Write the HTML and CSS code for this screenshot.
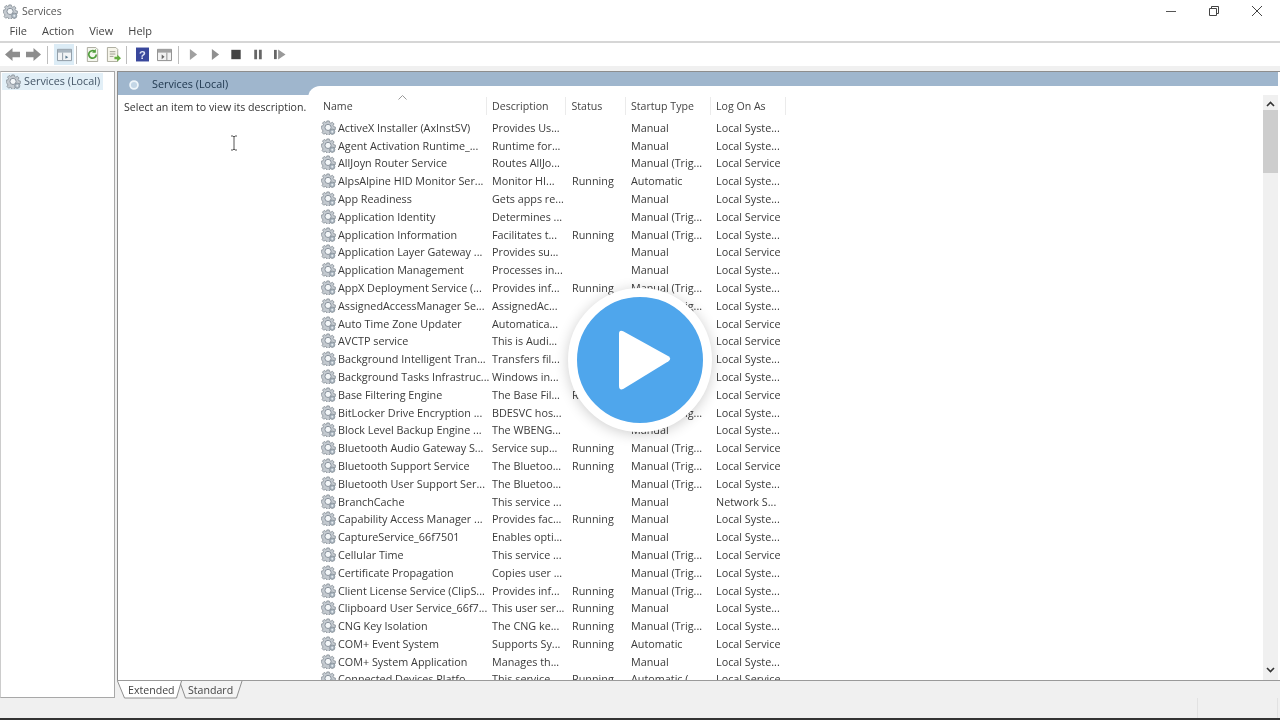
FILE: index.html
```html
<!DOCTYPE html>
<html lang="en">
<head>
<meta charset="utf-8">
<title>Services</title>
<link rel="stylesheet" href="styles.css">
</head>
<body>
<svg class="defs" width="0" height="0" aria-hidden="true">
  <symbol id="gear" viewBox="0 0 16 16">
    <path d="M6.200 1h2.600l.4 1.800 1.300.6 1.600-1 1.800 1.800-1 1.600.6 1.300 1.800.4v2.600l-1.800.4-.6 1.300 1 1.600-1.800 1.800-1.600-1-1.300.6-.4 1.800H6.200l-.4-1.800-1.300-.6-1.600 1-1.800-1.800 1-1.600-.6-1.300L.2 9.200V6.600L2 6.200l.6-1.300-1-1.600L3.400 1.500l1.600 1 1.300-.6z" fill="#c4cad0" stroke="#7f8890" stroke-width=".8"/>
    <circle cx="7.500" cy="7.900" r="3.300" fill="#f4f7f9" stroke="#828c96" stroke-width="1"/>
    <circle cx="12" cy="12.500" r="2.800" fill="#aab6c1" stroke="#7f8890" stroke-width=".7"/>
    <circle cx="12" cy="12.500" r="1" fill="#e9eef1"/>
  </symbol>
</svg>
<div class="window">
  <header class="titlebar">
    <svg class="title-icon"><use href="#gear"/></svg>
    <span class="title-text">Services</span>
    <div class="controls">
      <svg class="ctl" viewBox="0 0 10 10"><path d="M0 5.500h10" stroke="#555" fill="none"/></svg>
      <svg class="ctl" viewBox="0 0 10 10"><path d="M.5 2.500h7v7h-7zM2.500 2.500v-2h7v7h-2" stroke="#444" fill="none"/></svg>
      <svg class="ctl" viewBox="0 0 10 10"><path d="M0 0l10 10M10 0L0 10" stroke="#444" fill="none"/></svg>
    </div>
  </header>
  <nav class="menubar"><span>File</span><span>Action</span><span>View</span><span>Help</span></nav>
  <div class="toolbar">
    <svg class="tb arrows" viewBox="0 0 16 16"><path d="M0 8l8-7v4h8v6H8v4z" fill="#8d8d8d"/></svg>
    <svg class="tb arrows" viewBox="0 0 16 16"><path d="M16 8L8 1v4H0v6h8v4z" fill="#8d8d8d"/></svg>
    <i class="sep s1"></i>
    <div class="tb-active"><svg class="tb" viewBox="0 0 16 16"><path d="M.5 2.500h15v12H.5z" fill="#f2f4f6" stroke="#8c98a2"/><path d="M1 3h14v3H1z" fill="#a9b5bf"/><path d="M6 6v8" stroke="#8c98a2"/><path d="M9 9l3 1.800L9 12.600z" fill="#5a7a90"/></svg></div>
    <i class="sep s2"></i>
    <svg class="tb t-ref" viewBox="0 0 16 16"><path d="M2.500.5h9l2 2v13h-11z" fill="#f4f6ee" stroke="#a9a99b"/><path d="M12 8a4 4 0 1 1-1.300-3" fill="none" stroke="#4f9d3a" stroke-width="1.800"/><path d="M11.500 2v4h-4z" fill="#4f9d3a"/></svg>
    <svg class="tb t-exp" viewBox="0 0 16 16"><path d="M1.500.5h9l2 2v13h-11z" fill="#f6f5ea" stroke="#a9a99b"/><path d="M4 5h6M4 7.500h6M4 10h4" stroke="#9a9a8d"/><path d="M9 10.500h3V8l4 4-4 3.500V13H9z" fill="#63ad3f"/></svg>
    <i class="sep s3"></i>
    <svg class="tb t-help" viewBox="0 0 14 16"><path d="M0 .5h14v15H0z" fill="#39479c"/><text class="help-q" x="7" y="12.500" text-anchor="middle">?</text></svg>
    <svg class="tb t-view" viewBox="0 0 16 16"><path d="M.5 2.500h15v12H.5z" fill="#f2f2f2" stroke="#8a8a8a"/><path d="M1 3h14v3H1z" fill="#a2a2a2"/><path d="M10.500 6v8" stroke="#8a8a8a"/><path d="M5 8l3 2.500L5 13z" fill="#666"/></svg>
    <i class="sep s4"></i>
    <svg class="tb t-p1" viewBox="0 0 10 16"><path d="M1 2l8 6-8 6z" fill="#a0a0a0"/></svg>
    <svg class="tb t-p2" viewBox="0 0 10 16"><path d="M1 2l8 6-8 6z" fill="#8f8f8f"/></svg>
    <svg class="tb t-st" viewBox="0 0 10 16"><path d="M0 3h10v10H0z" fill="#444"/></svg>
    <svg class="tb t-pa" viewBox="0 0 10 16"><path d="M1 3h3v10H1zM6 3h3v10H6z" fill="#666"/></svg>
    <svg class="tb t-re" viewBox="0 0 13 16"><path d="M0 3h3v10H0z" fill="#666"/><path d="M4.500 2.500l8 5.500-8 5.500z" fill="#999"/></svg>
  </div>
  <main class="workspace">
    <aside class="tree">
      <div class="tree-item"><svg class="row-icon"><use href="#gear"/></svg><span>Services (Local)</span></div>
    </aside>
    <section class="panel">
      <div class="band">
        <svg class="band-icon" viewBox="0 0 16 16"><circle cx="8" cy="8" r="4.500" fill="#c3d6e6" stroke="#eef5fa" stroke-width="2"/></svg>
        <span>Services (Local)</span>
      </div>
      <div class="panel-body">
        <div class="desc-pane">Select an item to view its description.
          <svg class="cursor" viewBox="0 0 8 16"><path d="M1 1h2l1 1 1-1h2M4 2v12M1 15h2l1-1 1 1h2" stroke="#555" fill="none"/></svg>
        </div>
        <div class="list-pane">
          <div class="list">
            <div class="head">
              <span class="name">Name</span><span>Description</span><span>Status</span><span>Startup Type</span><span>Log On As</span>
              <svg class="sort" viewBox="0 0 9 5"><path d="M.5 4.500l4-4 4 4" fill="none" stroke="#999"/></svg>
            </div>
            <div class="rows" id="rows"></div>
          </div>
          <div class="scrollbar">
            <svg class="sb-arrow" viewBox="0 0 9 6"><path d="M1 5l3.500-3.500L8 5" fill="none" stroke="#333" stroke-width="1.600"/></svg>
            <div class="thumb"></div>
            <div class="sb-fill"></div>
            <svg class="sb-arrow" viewBox="0 0 9 6"><path d="M1 1l3.500 3.500L8 1" fill="none" stroke="#333" stroke-width="1.600"/></svg>
          </div>
        </div>
      </div>
      <div class="tabs">
        <svg class="tab-shapes" viewBox="0 0 130 18" aria-hidden="true">
          <path d="M62.500 0l6 17H119.500l5.500-17" fill="#f4f4f4" stroke="#8f8f8f"/>
          <path d="M.5 0l7 17h52l5-17" fill="#fff" stroke="#8f8f8f"/>
        </svg>
        <span class="tab">Extended</span><span class="tab">Standard</span>
      </div>
    </section>
  </main>
  <footer class="status"><i></i><i></i></footer>
</div>
<div class="play">
  <svg viewBox="3 5 62 74"><path d="M8 7L62 37Q66 40 62 43L8 76Q3 78 3 72V10Q3 5 8 7z" fill="#fff"/></svg>
</div>
<script src="rows.js"></script>
</body>
</html>
```
FILE: rows.js
```js
const data = [
["ActiveX Installer (AxInstSV)","Provides Us...","","Manual","Local Syste..."],
["Agent Activation Runtime_...","Runtime for...","","Manual","Local Syste..."],
["AllJoyn Router Service","Routes AllJo...","","Manual (Trig...","Local Service"],
["AlpsAlpine HID Monitor Ser...","Monitor HI...","Running","Automatic","Local Syste..."],
["App Readiness","Gets apps re...","","Manual","Local Syste..."],
["Application Identity","Determines ...","","Manual (Trig...","Local Service"],
["Application Information","Facilitates t...","Running","Manual (Trig...","Local Syste..."],
["Application Layer Gateway ...","Provides su...","","Manual","Local Service"],
["Application Management","Processes in...","","Manual","Local Syste..."],
["AppX Deployment Service (...","Provides inf...","Running","Manual (Trig...","Local Syste..."],
["AssignedAccessManager Se...","AssignedAc...","","Manual (Trig...","Local Syste..."],
["Auto Time Zone Updater","Automatica...","","Disabled","Local Service"],
["AVCTP service","This is Audi...","Running","Manual (Trig...","Local Service"],
["Background Intelligent Tran...","Transfers fil...","","Manual","Local Syste..."],
["Background Tasks Infrastruc...","Windows in...","Running","Automatic","Local Syste..."],
["Base Filtering Engine","The Base Fil...","Running","Automatic","Local Service"],
["BitLocker Drive Encryption ...","BDESVC hos...","","Manual (Trig...","Local Syste..."],
["Block Level Backup Engine ...","The WBENG...","","Manual","Local Syste..."],
["Bluetooth Audio Gateway S...","Service sup...","Running","Manual (Trig...","Local Service"],
["Bluetooth Support Service","The Bluetoo...","Running","Manual (Trig...","Local Service"],
["Bluetooth User Support Ser...","The Bluetoo...","","Manual (Trig...","Local Syste..."],
["BranchCache","This service ...","","Manual","Network S..."],
["Capability Access Manager ...","Provides fac...","Running","Manual","Local Syste..."],
["CaptureService_66f7501","Enables opti...","","Manual","Local Syste..."],
["Cellular Time","This service ...","","Manual (Trig...","Local Service"],
["Certificate Propagation","Copies user ...","","Manual (Trig...","Local Syste..."],
["Client License Service (ClipS...","Provides inf...","Running","Manual (Trig...","Local Syste..."],
["Clipboard User Service_66f7...","This user ser...","Running","Manual","Local Syste..."],
["CNG Key Isolation","The CNG ke...","Running","Manual (Trig...","Local Syste..."],
["COM+ Event System","Supports Sy...","Running","Automatic","Local Service"],
["COM+ System Application","Manages th...","","Manual","Local Syste..."],
["Connected Devices Platfo...","This service ...","Running","Automatic (...","Local Service"]
];
const host = document.getElementById("rows");
for (const r of data) {
  const row = document.createElement("div");
  row.className = "row";
  const first = document.createElement("span");
  first.className = "name";
  first.innerHTML = '<svg class="row-icon"><use href="#gear"/></svg>';
  first.append(r[0]);
  row.append(first);
  for (let i = 1; i < 5; i++) {
    const c = document.createElement("span");
    c.textContent = r[i];
    row.append(c);
  }
  host.append(row);
}
```
FILE: styles.css
```css
* { box-sizing: border-box; }
html, body { margin: 0; height: 720px; overflow: hidden; }
body { background: #fff; font: 10.800px/1 "Open Sans", "Noto Sans", sans-serif; color: #3a3a3a; position: relative; }
.defs { position: absolute; }
.window { width: 1280px; height: 720px; display: flex; flex-direction: column; border-bottom: 2px solid #333; background: #f0f0f0; filter: blur(.35px); }

.titlebar { height: 21px; background: #fff; display: flex; align-items: center; padding: 0 0 0 3px; flex: none; }
.title-icon { width: 15px; height: 15px; margin-top: 1px; }
.title-text { margin: 1px 0 0 4px; font-size: 10.500px; color: #555; }
.controls { margin-left: auto; display: flex; gap: 33px; padding-right: 18px; }
.ctl { width: 10px; height: 10px; }

.menubar { height: 22px; background: #fff; border-bottom: 2px solid #d6d6d6; display: flex; align-items: center; gap: 15px; padding: 0 0 2px 9.500px; flex: none; color: #444; font-size: 11px; }

.toolbar { height: 23px; background: #fff; display: flex; align-items: center; padding-left: 5px; flex: none; }
.tb { width: 15px; height: 15px; flex: none; display: block; }
.arrows + .arrows { margin-left: 6px; }
.sep { width: 1px; height: 18px; background: #bdbdbd; flex: none; }
.s1 { margin-left: 6px; }
.tb-active { margin-left: 6px; width: 20px; height: 21px; background: #dcecf6; display: flex; align-items: center; justify-content: center; flex: none; }
.s2 { margin-left: 2px; }
.t-ref { margin-left: 8px; }
.t-exp { margin-left: 6px; }
.s3 { margin-left: 5px; }
.t-help { margin-left: 9px; width: 13px; }
.help-q { font: bold 12px "Liberation Sans", sans-serif; fill: #dfe3f5; }
.t-view { margin-left: 8px; }
.s4 { margin-left: 6px; }
.t-p1 { margin-left: 10px; width: 9px; }
.t-p2 { margin-left: 13px; width: 9px; }
.t-st { margin-left: 11px; width: 10px; }
.t-pa { margin-left: 12px; width: 10px; }
.t-re { margin-left: 11px; width: 12px; }

.workspace { height: 627px; margin-top: 5px; display: flex; gap: 2px; background: #f0f0f0; flex: none; }
.tree { width: 115px; background: #fff; border: 1px solid #a8a8a8; border-left-color: #ccc; padding: 0 0 0 1px; flex: none; }
.tree-item { height: 17px; margin-top: 1px; padding: 0 0 1px 4px; display: flex; align-items: center; gap: 3px; background: #e2eff7; color: #445566; width: 101px; white-space: nowrap; }
.row-icon { width: 15px; height: 15px; flex: none; display: inline-block; }
.panel { flex: 1; min-width: 0; display: flex; flex-direction: column; background: #fff; border-top: 1px solid #8d8d8d; border-left: 1px solid #8d8d8d; }
.band { height: 23px; background: #9fb6cd; display: flex; align-items: center; gap: 11px; padding: 2px 0 0 9px; color: #20384f; margin-right: 2px; flex: none; }
.band-icon { width: 14px; height: 14px; }
.panel-body { flex: 1; display: flex; min-height: 0; }
.desc-pane { width: 190px; flex: none; padding: 7px 0 0 6px; white-space: nowrap; position: relative; color: #333; font-size: 10.600px; }
.cursor { position: absolute; left: 112px; top: 40px; width: 8px; height: 16px; }
.list-pane { flex: 1; min-width: 0; display: flex; background: #fff; border-radius: 12px 0 0 0; margin-top: -9px; padding: 9px 2px 0 0; position: relative; z-index: 1; overflow: hidden; }
.list { flex: 1; min-width: 0; overflow: hidden; }
.head, .row { display: grid; grid-template-columns: 179px 79px 60px 85px 75px; }
.head { height: 23.400px; align-items: start; position: relative; color: #444; padding-top: 2px; font-size: 10.600px; }
.head span { padding-left: 5px; height: 18px; line-height: 18px; border-right: 1px solid #ebebeb; }
.head span.name { padding-left: 15px; }
.head span:nth-child(3) { padding-left: 5.500px; }
.row span:nth-child(3) { padding-left: 6px; }
.sort { position: absolute; left: 90px; top: 0; width: 9px; height: 5px; }
.row { height: 17.800px; align-items: center; color: #3a3a3a; white-space: nowrap; line-height: 17px; }
.row span { padding-left: 5px; }
.row span.name { padding-left: 13px; display: flex; align-items: center; gap: 2px; }
.scrollbar { width: 15px; flex: none; background: #f0f0f0; display: flex; flex-direction: column; align-items: center; padding: 6px 0 7px; }
.sb-arrow { width: 9px; height: 6px; flex: none; }
.thumb { width: 100%; height: 63px; background: #cdcdcd; margin-top: 3px; flex: none; }
.sb-fill { flex: 1; }

.tabs { height: 18px; flex: none; background: #f0f0f0; border-top: 1px solid #9a9a9a; display: flex; margin-left: -1px; position: relative; }
.tab-shapes { position: absolute; left: 0; top: 0; width: 130px; height: 18px; }
.tab { position: relative; height: 17px; line-height: 18px; color: #444; margin-left: 11px; width: 46px; font-size: 10.600px; }
.tab + .tab { margin-left: 14px; }

.status { flex: 1; background: #f0f0f0; display: flex; justify-content: flex-end; }
.status i { width: 1px; height: 100%; background: #e2e2e2; margin-right: 79px; }
.status i + i { margin-right: 2px; }

.play { position: absolute; left: 568px; top: 288px; width: 144px; height: 144px; border-radius: 50%; background: #4fa6ec; border: 9px solid #fff; box-shadow: 0 2px 14px rgba(0,0,0,.2); display: flex; align-items: center; justify-content: center; z-index: 5; }
.play svg { width: 52px; height: 69px; margin-left: 10px; }
```
